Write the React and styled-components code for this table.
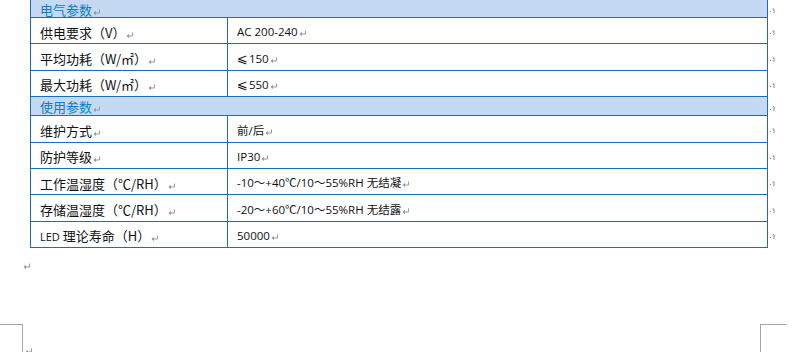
import React from 'react';
import styled, { createGlobalStyle } from 'styled-components';

const GlobalStyle = createGlobalStyle`
    html, body {
        margin: 0;
        padding: 0;
        background: #fff;
    }
`;

// built lazily so the styled spans below are defined by then
const getSections = () => [
    {
        title: '电气参数',
        rows: [
            ['供电要求（V）', 'AC 200-240'],
            ['平均功耗（W/㎡）', <><Leq>⩽</Leq>150</>],
            ['最大功耗（W/㎡）', <><Leq>⩽</Leq>550</>],
        ],
    },
    {
        title: '使用参数',
        rows: [
            ['维护方式', '前/后'],
            ['防护等级', 'IP30'],
            ['工作温湿度（℃/RH）', '-10～+40℃/10～55%RH 无结凝'],
            ['存储温湿度（℃/RH）', '-20～+60℃/10～55%RH 无结露'],
            [<><Latin>LED</Latin> 理论寿命（H）</>, '50000'],
        ],
    },
];

// Word-style paragraph mark (↵)
const ParaMark = () => (
    <MarkSvg width="8" height="7" viewBox="0 0 8 7">
        <path d="M6.5 0.5 V4 H1.5" fill="none" stroke="#9a9a9a" strokeWidth="1" />
        <path d="M0.5 4 L3 1.8 L3 6.2 Z" fill="#9a9a9a" />
    </MarkSvg>
);

// end-of-row marker shown to the right of each table row
const RowMark = () => (
    <svg width="6" height="5" viewBox="0 0 6 5">
        <rect x="0" y="3" width="1" height="1" fill="#8a8a8a" />
        <path d="M2.5 1 H4 V5" fill="none" stroke="#8a8a8a" strokeWidth="1" />
    </svg>
);

export default function App() {
    const sections = getSections();
    return (
        <>
            <GlobalStyle />
            <Page>
                <SpecTable>
                    <colgroup>
                        <col style={{ width: 197 }} />
                        <col style={{ width: 540 }} />
                        <col style={{ width: 29 }} />
                    </colgroup>
                    <tbody>
                        {sections.map((section, sIdx) => (
                            <React.Fragment key={section.title}>
                                <tr>
                                    <HeaderCell colSpan={2} $first={sIdx === 0}>
                                        {section.title}
                                        <ParaMark />
                                    </HeaderCell>
                                    <EndCell>
                                        <RowMark />
                                    </EndCell>
                                </tr>
                                {section.rows.map(([label, value], idx) => (
                                    <tr key={idx}>
                                        <LabelCell>
                                            {label}
                                            <ParaMark />
                                        </LabelCell>
                                        <ValueCell>
                                            {value}
                                            <ParaMark />
                                        </ValueCell>
                                        <EndCell>
                                            <RowMark />
                                        </EndCell>
                                    </tr>
                                ))}
                            </React.Fragment>
                        ))}
                    </tbody>
                </SpecTable>
                <TrailingPara>
                    <ParaMark />
                </TrailingPara>
                <CornerLeft />
                <CornerRight />
                <CornerPara>
                    <ParaMark />
                </CornerPara>
            </Page>
        </>
    );
}

const Page = styled.div`
    position: relative;
    width: 797px;
    height: 352px;
    overflow: hidden;
    background: #fff;
    font-family: 'Noto Sans CJK SC', 'Noto Sans', sans-serif;
    color: #111;
`;

const SpecTable = styled.table`
    margin-left: 30px;
    border-collapse: collapse;
    table-layout: fixed;
    width: 766px;
`;

const Cell = styled.td`
    border: 1px solid #1a6dbb;
    padding: 3px 0 0 9px;
    vertical-align: middle;
    white-space: nowrap;
    line-height: 1;
`;

const HeaderCell = styled(Cell)`
    height: ${({ $first }) => ($first ? '16px' : '17px')};
    padding-top: 1px;
    background: #c6d9f3;
    color: #0a7dcc;
    font-size: 13px;
    border-top: ${({ $first }) => ($first ? 'none' : '1px solid #1a6dbb')};
`;

const LabelCell = styled(Cell)`
    height: 22.4px;
    font-size: 13px;
`;

const ValueCell = styled(Cell)`
    height: 22.4px;
    font-family: 'Open Sans', 'Noto Sans CJK SC', sans-serif;
    font-size: 11.5px;
`;

const Latin = styled.span`
    font-family: 'Open Sans', sans-serif;
    font-size: 11px;
`;

const Leq = styled.span`
    font-family: 'DejaVu Sans', sans-serif;
    font-size: 13px;
    margin-right: 1px;
`;

const EndCell = styled.td`
    border: none;
    padding: 2px 0 0 2px;
    vertical-align: middle;
    line-height: 0;
`;

const MarkSvg = styled.svg`
    display: inline-block;
    margin-left: 1px;
    vertical-align: -1px;
`;

const TrailingPara = styled.div`
    margin: 14px 0 0 22px;
    line-height: 0;
`;

const CornerLeft = styled.div`
    position: absolute;
    left: 0;
    top: 324px;
    width: 22px;
    height: 40px;
    border-top: 1px solid #a6a6a6;
    border-right: 1px solid #a6a6a6;
`;

const CornerRight = styled.div`
    position: absolute;
    left: 760px;
    top: 324px;
    width: 26px;
    height: 40px;
    border-top: 1px solid #a6a6a6;
    border-left: 1px solid #a6a6a6;
`;

const CornerPara = styled.div`
    position: absolute;
    left: 24px;
    top: 347px;
    line-height: 0;
`;
